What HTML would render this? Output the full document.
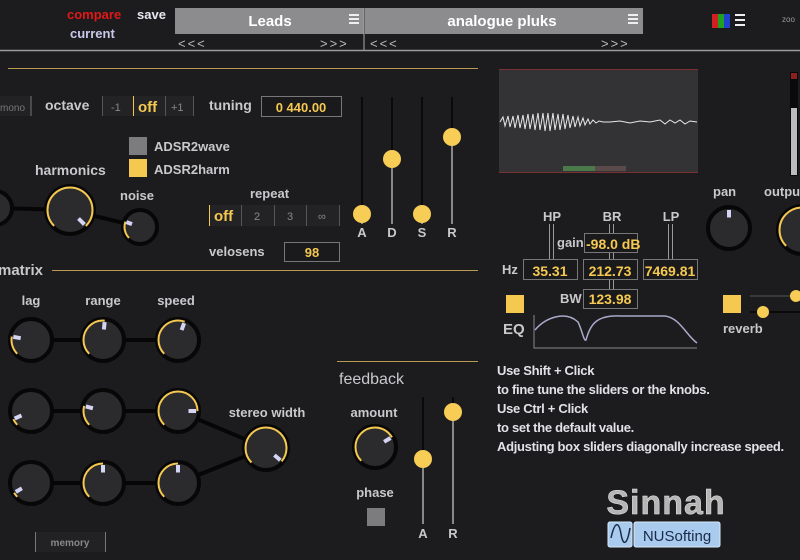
<!DOCTYPE html>
<html><head><meta charset="utf-8"><style>
html,body{margin:0;padding:0;background:#1c1c1f;}
svg{display:block;font-family:"Liberation Sans",sans-serif;}
.l{fill:#c9c9cc;font-weight:bold;font-size:13px;}
.g{fill:#f5c850;font-weight:bold;}
</style></head><body>
<svg width="800" height="560" viewBox="0 0 800 560" xmlns="http://www.w3.org/2000/svg">
<rect width="800" height="560" fill="#1c1c1f"/>
<text x="67" y="19" font-size="13" font-weight="bold" fill="#e01818">compare</text>
<text x="137" y="19" font-size="13" font-weight="bold" fill="#e8e8f0">save</text>
<text x="70" y="38" font-size="13" font-weight="bold" fill="#c8c8e8">current</text>
<rect x="175" y="8" width="189" height="26" fill="#8c8c8e"/>
<rect x="365" y="8" width="278" height="26" fill="#8c8c8e"/>
<line x1="364" y1="8" x2="364" y2="50" stroke="#aaa" stroke-width="1"/>
<text x="270" y="26" font-size="15" font-weight="bold" fill="#fff" text-anchor="middle">Leads</text>
<text x="502" y="26" font-size="15" font-weight="bold" fill="#fff" text-anchor="middle">analogue pluks</text>
<g fill="#eee"><rect x="349" y="14" width="10" height="2"/><rect x="349" y="18" width="10" height="2"/><rect x="349" y="22" width="10" height="2"/>
<rect x="628" y="14" width="10" height="2"/><rect x="628" y="18" width="10" height="2"/><rect x="628" y="22" width="10" height="2"/></g>
<g font-size="13" fill="#bbb" letter-spacing="2"><text x="178" y="48">&lt;&lt;&lt;</text><text x="320" y="48">&gt;&gt;&gt;</text><text x="370" y="48">&lt;&lt;&lt;</text><text x="601" y="48">&gt;&gt;&gt;</text></g>
<line x1="0" y1="50.5" x2="800" y2="50.5" stroke="#9a9a9a" stroke-width="1.5"/>
<rect x="712" y="14" width="6" height="14" fill="#d02020"/><rect x="718" y="14" width="6" height="14" fill="#20a020"/><rect x="724" y="14" width="6" height="14" fill="#2040d0"/>
<g fill="#eee"><rect x="735" y="14" width="10" height="2"/><rect x="735" y="19" width="10" height="2"/><rect x="735" y="24" width="10" height="2"/></g>
<text x="782" y="22" font-size="8" fill="#999">zoo</text>
<line x1="8" y1="68.5" x2="478" y2="68.5" stroke="#b89a50" stroke-width="1"/>
<line x1="52" y1="270.5" x2="478" y2="270.5" stroke="#b89a50" stroke-width="1"/>
<line x1="337" y1="361.5" x2="478" y2="361.5" stroke="#b89a50" stroke-width="1"/>
<text x="-2" y="275" font-size="15" font-weight="bold" fill="#c9c9cc">matrix</text>
<rect x="0" y="96" width="30" height="20" fill="#222224"/><line x1="31" y1="96" x2="31" y2="116" stroke="#777"/>
<text x="0" y="111" font-size="10" fill="#777">mono</text>
<text x="45" y="110" font-size="14" font-weight="bold" fill="#c9c9cc">octave</text>
<rect x="103" y="96" width="90" height="20" fill="#232325"/>
<g stroke="#555"><line x1="102.5" y1="96" x2="102.5" y2="116"/><line x1="193.5" y1="96" x2="193.5" y2="116"/><line x1="165.5" y1="96" x2="165.5" y2="116"/></g>
<line x1="133.5" y1="96" x2="133.5" y2="116" stroke="#f5c850"/>
<text x="111" y="111" font-size="11" fill="#888">-1</text>
<text x="138" y="112" font-size="15" class="g">off</text>
<text x="171" y="111" font-size="11" fill="#888">+1</text>
<text x="209" y="110" font-size="14" font-weight="bold" fill="#c9c9cc">tuning</text>
<rect x="261.5" y="96.5" width="80" height="20" fill="#1a1a1c" stroke="#777"/>
<text x="301" y="112" font-size="13" class="g" text-anchor="middle">0 440.00</text>
<rect x="129" y="137" width="18" height="18" fill="#7c7c7e"/>
<rect x="129" y="159" width="18" height="18" fill="#f5c850"/>
<text x="154" y="151" class="l" font-size="12">ADSR2wave</text>
<text x="154" y="174" class="l" font-size="12">ADSR2harm</text>
<text x="35" y="175" font-size="14" font-weight="bold" fill="#c9c9cc">harmonics</text>
<text x="120" y="200" class="l" font-size="14">noise</text>
<text x="250" y="198" class="l" font-size="14">repeat</text>
<rect x="209" y="205" width="130" height="21" fill="#232325"/>
<line x1="209.5" y1="205" x2="209.5" y2="226" stroke="#f5c850"/>
<g stroke="#555"><line x1="241.5" y1="205" x2="241.5" y2="226"/><line x1="274.5" y1="205" x2="274.5" y2="226"/><line x1="306.5" y1="205" x2="306.5" y2="226"/><line x1="339.5" y1="205" x2="339.5" y2="226"/></g>
<text x="214" y="221" font-size="15" class="g">off</text>
<text x="254" y="220" font-size="11" fill="#888">2</text>
<text x="287" y="220" font-size="11" fill="#888">3</text>
<text x="318" y="220" font-size="11" fill="#888">∞</text>
<text x="209" y="256" class="l" font-size="14">velosens</text>
<rect x="284.5" y="242.5" width="55" height="19" fill="#1a1a1c" stroke="#777"/>
<text x="312" y="257" font-size="13" class="g" text-anchor="middle">98</text>
<g stroke-width="2">
<line x1="362" y1="97" x2="362" y2="214" stroke="#0a0a0a"/><line x1="362" y1="214" x2="362" y2="224" stroke="#888"/>
<line x1="392" y1="97" x2="392" y2="159" stroke="#0a0a0a"/><line x1="392" y1="159" x2="392" y2="224" stroke="#888"/>
<line x1="422" y1="97" x2="422" y2="214" stroke="#0a0a0a"/><line x1="422" y1="214" x2="422" y2="224" stroke="#888"/>
<line x1="452" y1="97" x2="452" y2="137" stroke="#0a0a0a"/><line x1="452" y1="137" x2="452" y2="224" stroke="#888"/>
</g>
<g fill="#f7cd55"><circle cx="362" cy="214" r="9"/><circle cx="392" cy="159" r="9"/><circle cx="422" cy="214" r="9"/><circle cx="452" cy="137" r="9"/></g>
<g class="l" font-size="13" text-anchor="middle"><text x="362" y="237">A</text><text x="392" y="237">D</text><text x="422" y="237">S</text><text x="452" y="237">R</text></g>
<rect x="499" y="69" width="199" height="104" fill="#333335"/>
<line x1="499" y1="69.5" x2="698" y2="69.5" stroke="#7a3030"/><line x1="499" y1="172.5" x2="698" y2="172.5" stroke="#7a3030"/>
<rect x="563" y="166" width="32" height="5" fill="#4a7a4a"/><rect x="595" y="166" width="31" height="5" fill="#5a4a4a"/>
<polyline fill="none" stroke="#e8e8e8" stroke-width="1" points="500,122 503,117 505,126 508,116 510,127 513,116 515,128 518,115 520,128 523,115 525,129 528,114 530,129 533,114 535,130 538,113 540,130 543,113 545,131 548,113 550,131 553,113 555,130 558,114 560,130 563,114 565,129 568,115 570,128 573,116 575,127 578,117 580,126 583,118 585,125 588,119 590,124 593,120 596,123 599,121 603,122 610,122 620,121 630,123 640,121 650,122 660,120 665,124 670,120 675,123 680,120 685,124 690,121 697,122"/>
<rect x="790" y="72" width="8" height="104" fill="#0a0a0a"/><rect x="791" y="108" width="6" height="67" fill="#bbb"/><rect x="791" y="73" width="6" height="6" fill="#8a2020"/>
<g class="l" font-size="12" text-anchor="middle"><text x="552" y="221">HP</text><text x="612" y="221">BR</text><text x="671" y="221">LP</text></g>
<g stroke="#999" stroke-width="1"><line x1="549.5" y1="224" x2="549.5" y2="260"/><line x1="553.5" y1="224" x2="553.5" y2="260"/>
<line x1="609.5" y1="224" x2="609.5" y2="290"/><line x1="613.5" y1="224" x2="613.5" y2="290"/>
<line x1="668.5" y1="224" x2="668.5" y2="260"/><line x1="672.5" y1="224" x2="672.5" y2="260"/></g>
<text x="557" y="247" class="l" font-size="12">gain</text>
<g fill="#1a1a1c" stroke="#777"><rect x="584.5" y="233.5" width="53" height="19"/><rect x="523.5" y="259.5" width="54" height="20"/><rect x="583.5" y="259.5" width="54" height="20"/><rect x="643.5" y="259.5" width="54" height="20"/><rect x="583.5" y="289.5" width="54" height="19"/></g>
<text x="586" y="249" font-size="14" class="g">-98.0 dB</text>
<text x="502" y="274" class="l" font-size="11">Hz</text>
<g font-size="14" class="g" text-anchor="middle"><text x="550" y="276">35.31</text><text x="610" y="276">212.73</text><text x="670" y="276">7469.81</text><text x="610" y="304">123.98</text></g>
<text x="560" y="303" class="l" font-size="12">BW</text>
<rect x="506" y="295" width="18" height="18" fill="#f5c850"/>
<text x="503" y="334" font-size="15" font-weight="bold" fill="#c9c9cc">EQ</text>
<polyline fill="none" stroke="#888" points="534,315 534,348 697,348"/>
<path d="M535,330 C545,318 565,310 578,322 C582,330 584,342 586,340 C590,325 596,315 620,316 L665,316 C680,318 686,335 697,343" fill="none" stroke="#a8a8c8" stroke-width="1.5"/>
<text x="713" y="196" class="l" font-size="14">pan</text>
<text x="764" y="196" class="l" font-size="14">output</text>
<rect x="723" y="295" width="18" height="18" fill="#f5c850"/>
<text x="723" y="333" class="l" font-size="15">reverb</text>
<g stroke="#0a0a0a" stroke-width="2"><line x1="750" y1="296" x2="800" y2="296"/><line x1="750" y1="312" x2="800" y2="312"/></g>
<line x1="750" y1="296" x2="790" y2="296" stroke="#666" stroke-width="1"/>
<circle cx="796" cy="296" r="6" fill="#f7cd55"/><circle cx="763" cy="312" r="6" fill="#f7cd55"/>
<g stroke="#060606" stroke-width="4">
<line x1="-5" y1="208" x2="70" y2="210"/><line x1="70" y1="210" x2="140" y2="227"/>
<line x1="31" y1="340" x2="178" y2="340"/><line x1="31" y1="411" x2="178" y2="411"/><line x1="31" y1="483" x2="178" y2="483"/>
<line x1="178" y1="411" x2="266" y2="448"/><line x1="178" y1="483" x2="266" y2="448"/>
</g>
<g class="l" font-size="12" text-anchor="middle"><text x="31" y="305">lag</text><text x="103" y="305">range</text><text x="176" y="305">speed</text><text x="267" y="417">stereo width</text><text x="374" y="417">amount</text><text x="375" y="497">phase</text></g>
<g fill="#2b2b2d" stroke="#070707" stroke-width="4">
<circle cx="-5" cy="208" r="17"/>
<circle cx="70" cy="210" r="24"/><circle cx="140" cy="227" r="17"/>
<circle cx="729" cy="228" r="21"/><circle cx="802" cy="230" r="24"/>
<circle cx="31" cy="340" r="21"/><circle cx="103" cy="340" r="21"/><circle cx="178" cy="340" r="21"/>
<circle cx="31" cy="411" r="21"/><circle cx="103" cy="411" r="21"/><circle cx="178" cy="411" r="21"/>
<circle cx="31" cy="483" r="21"/><circle cx="103" cy="483" r="21"/><circle cx="178" cy="483" r="21"/>
<circle cx="266" cy="448" r="22"/><circle cx="375" cy="447" r="21"/>
</g>
<g fill="none" stroke="#f5c850" stroke-width="2">
<circle cx="70" cy="210" r="22.5" stroke-dasharray="106 200" transform="rotate(135 70 210)"/>
<circle cx="140" cy="227" r="15.5" stroke-dasharray="17.6 200" transform="rotate(135 140 227)"/>
<circle cx="802" cy="230" r="22.5" stroke-dasharray="98 200" transform="rotate(135 802 230)"/>
<circle cx="31" cy="340" r="19.5" stroke-dasharray="18.7 200" transform="rotate(135 31 340)"/>
<circle cx="103" cy="340" r="19.5" stroke-dasharray="47.6 200" transform="rotate(135 103 340)"/>
<circle cx="178" cy="340" r="19.5" stroke-dasharray="52.7 200" transform="rotate(135 178 340)"/>
<circle cx="31" cy="411" r="19.5" stroke-dasharray="6.8 200" transform="rotate(135 31 411)"/>
<circle cx="103" cy="411" r="19.5" stroke-dasharray="20.4 200" transform="rotate(135 103 411)"/>
<circle cx="178" cy="411" r="19.5" stroke-dasharray="76.6 200" transform="rotate(135 178 411)"/>
<circle cx="31" cy="483" r="19.5" stroke-dasharray="5.1 200" transform="rotate(135 31 483)"/>
<circle cx="103" cy="483" r="19.5" stroke-dasharray="45.9 200" transform="rotate(135 103 483)"/>
<circle cx="178" cy="483" r="19.5" stroke-dasharray="45.9 200" transform="rotate(135 178 483)"/>
<circle cx="266" cy="448" r="20.5" stroke-dasharray="94.8 200" transform="rotate(135 266 448)"/>
<circle cx="375" cy="447" r="19.5" stroke-dasharray="66.4 200" transform="rotate(135 375 447)"/>
</g>
<g stroke="#d4d4f4" stroke-width="4">
<line x1="78.5" y1="218.5" x2="84.4" y2="224.4"/>
<line x1="132" y1="224.1" x2="126.4" y2="222.1"/>
<line x1="729" y1="217.5" x2="729" y2="210"/>
<line x1="20.7" y1="338.2" x2="13.3" y2="336.9"/>
<line x1="103.9" y1="329.5" x2="104.6" y2="322.1"/>
<line x1="181.6" y1="330.1" x2="184.1" y2="323.2"/>
<line x1="21.5" y1="415.4" x2="14.7" y2="418.6"/>
<line x1="92.9" y1="408.3" x2="85.8" y2="406.4"/>
<line x1="188.5" y1="411" x2="196" y2="411"/>
<line x1="21.9" y1="488.3" x2="15.8" y2="491.9"/>
<line x1="103" y1="472.5" x2="103" y2="465"/>
<line x1="178" y1="472.5" x2="178" y2="465"/>
<line x1="274.4" y1="455.1" x2="280.3" y2="460.1"/>
<line x1="384.1" y1="441.8" x2="390.5" y2="438"/>
</g>
<rect x="36" y="532" width="69" height="20" fill="#222224"/>
<g stroke="#777"><line x1="35.5" y1="532" x2="35.5" y2="552"/><line x1="105.5" y1="532" x2="105.5" y2="552"/></g>
<text x="70" y="546" font-size="10" font-weight="bold" fill="#888" text-anchor="middle">memory</text>
<text x="339" y="384" font-size="16" fill="#c9c9cc">feedback</text>
<rect x="367" y="508" width="18" height="18" fill="#7c7c7e"/>
<g stroke-width="2">
<line x1="423" y1="397" x2="423" y2="459" stroke="#0a0a0a"/><line x1="423" y1="459" x2="423" y2="524" stroke="#888"/>
<line x1="453" y1="397" x2="453" y2="412" stroke="#0a0a0a"/><line x1="453" y1="412" x2="453" y2="524" stroke="#888"/>
</g>
<circle cx="423" cy="459" r="9" fill="#f7cd55"/><circle cx="453" cy="412" r="9" fill="#f7cd55"/>
<g class="l" font-size="13" text-anchor="middle"><text x="423" y="538">A</text><text x="453" y="538">R</text></g>
<g font-size="13" fill="#e2e2e6" font-weight="bold" letter-spacing="-0.3">
<text x="497" y="375">Use Shift + Click</text>
<text x="497" y="394">to fine tune the sliders or the knobs.</text>
<text x="497" y="413">Use Ctrl + Click</text>
<text x="497" y="432">to set the default value.</text>
<text x="497" y="451">Adjusting box sliders diagonally increase speed.</text>
</g>
<text x="666" y="514" font-size="34" font-weight="bold" fill="#b5b5b5" text-anchor="middle" stroke="#e8e8e8" stroke-width="0.5" letter-spacing="1">Sinnah</text>
<rect x="608" y="522" width="24" height="25" rx="2" fill="#a8cbee" stroke="#d8e8f8"/>
<rect x="634" y="522" width="86" height="25" rx="2" fill="#a8cbee" stroke="#d8e8f8"/>
<path d="M611,538 C615,520 619,522 621,534 C623,546 627,546 630,528" fill="none" stroke="#1a2a4a" stroke-width="1.5"/>
<text x="677" y="541" font-size="15" fill="#1a2a4a" text-anchor="middle">NUSofting</text>
</svg>
</body></html>
